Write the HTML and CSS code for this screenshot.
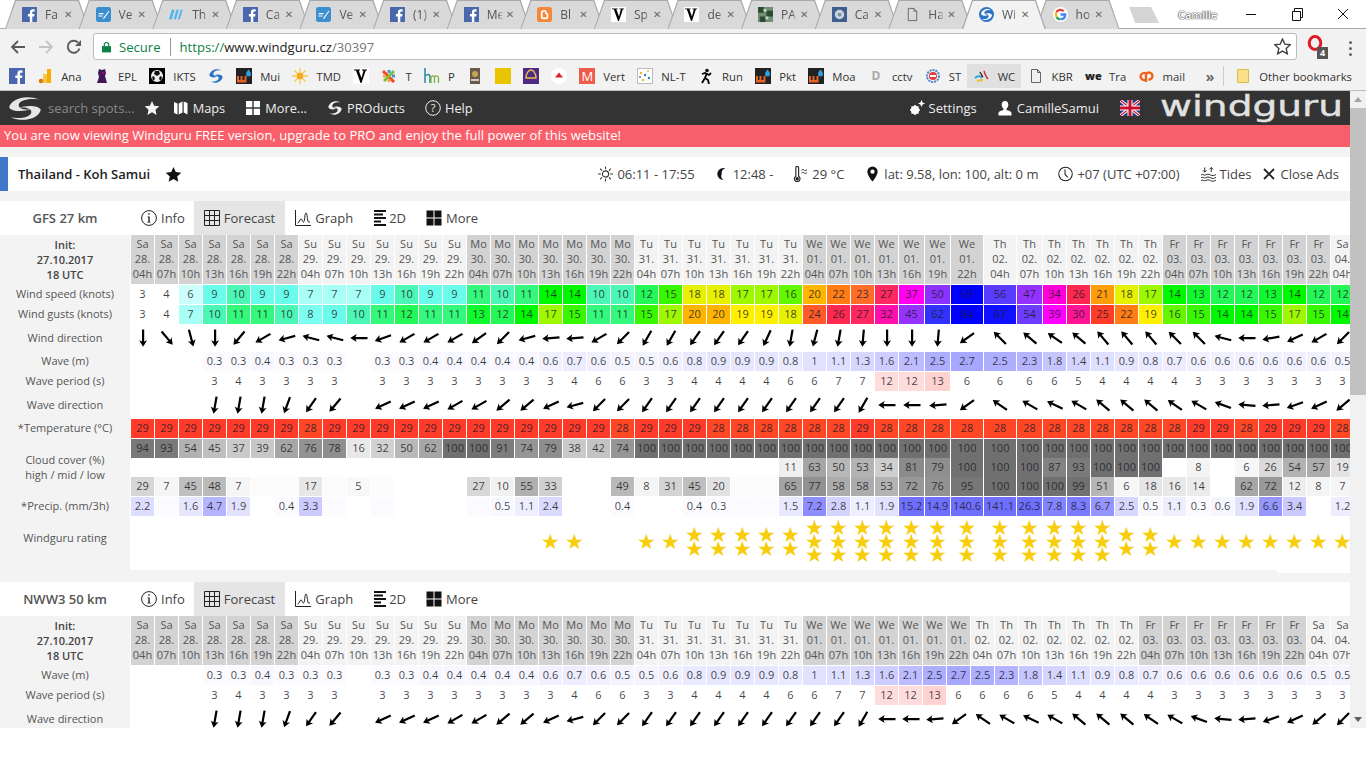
FILE: index.html
```html
<!DOCTYPE html>
<html lang="en">
<head>
<meta charset="utf-8">
<title>Windguru - Thailand - Koh Samui</title>
<link rel="stylesheet" href="styles.css">
</head>
<body>
<svg class="defs" width="0" height="0" aria-hidden="true">
  <symbol id="arrow" viewBox="0 0 20 20"><path d="M9 1.500h2.200v12l2.900-1.200L10.100 18.800 6.100 12.300 9 13.500z"/></symbol>
  <symbol id="swirl" viewBox="0 0 24 24" preserveAspectRatio="none"><path d="M2 11C3 4 12-1 21 4 14 2.500 8 5 8 9c0 3 4 4.500 8 3.500C11 15 4 15 2 11z"/><path d="M22 13c-1 7-10 12-19 7 7 1.500 13-1 13-5 0-3-4-4.500-8-3.500C13 9 20 9 22 13z"/></symbol>
  <symbol id="star" viewBox="0 0 24 24"><path d="M12 1.500l3.200 7.100 7.800.9-5.800 5.200 1.600 7.700L12 18.500l-6.800 3.900 1.600-7.700L1 9.500l7.800-.9z"/></symbol>
  <symbol id="fb" viewBox="0 0 16 16"><rect width="16" height="16" fill="#4a66ad"/><path fill="#fff" d="M11 16V10h2l.4-2.500H11V6c0-.8.3-1.200 1.200-1.200h1.300V2.500C13 2.400 12.300 2.300 11.500 2.300 9.600 2.300 8.400 3.500 8.400 5.600v1.900H6.300V10h2.100v6z"/></symbol>
  <symbol id="ve" viewBox="0 0 16 16"><rect width="16" height="16" rx="2.500" fill="#3c8fcf"/><path fill="#fff" d="M3 6.500h5v1.200H3zM2.500 9h4.500v1.200H2.500zM7.500 12 13.500 4l.8.500-6 8.500z"/></symbol>
  <symbol id="slashes" viewBox="0 0 16 16"><path fill="#4fb4ea" d="M3 3h3L3 13H0zM8 3h2.500L7.500 13H5zM12.500 3H14.500L11.500 13H9.500z"/></symbol>
  <symbol id="blogger" viewBox="0 0 16 16"><rect width="16" height="16" rx="3" fill="#f5863a"/><path fill="none" stroke="#fff" stroke-width="1.800" d="M5 6.500C5 4.500 6 4 7.500 4H8c1 0 1.500 .8 1.500 2.300 0 .4.400.7 1 .7 .6 0 .7.300.7 1v2.500c0 1-1 1.700-2 1.700H6.700C5.700 12.300 5 11.500 5 10.500z"/></symbol>
  <symbol id="doc" viewBox="0 0 16 16"><path fill="none" stroke="#666" d="M3.500 1.500h6l3 3v10h-9zM9.500 1.500v3h3"/></symbol>
  <symbol id="wu" viewBox="0 0 16 16"><rect width="16" height="16" fill="#222"/><path fill="#e8632a" d="M1 8h2v4h1.500V8h2v4h2V8h2v6.500H1z"/><path fill="#2e9fe0" d="M12.500 1.500c1.500 2 2.500 3.200 2.500 4.500a2.500 2.500 0 0 1-5 0c0-1.300 1-2.500 2.500-4.500z"/></symbol>
  <symbol id="vlogo" viewBox="0 0 16 16"><rect width="16" height="16" fill="#fff"/><path d="M1 1.500h6v1H5.700L8.500 10l2-7.500H9v-1h5v1h-1.300L8.500 15h-1L3 2.500H1z"/></symbol>
</svg>

<header class="browser">
  <div class="tabstrip">
    <div class="tab"><svg class="fav"><use href="#fb"/></svg><span class="tab-title">Fa</span><span class="tab-x">✕</span></div>
    <div class="tab"><svg class="fav"><use href="#ve"/></svg><span class="tab-title">Ve</span><span class="tab-x">✕</span></div>
    <div class="tab"><svg class="fav"><use href="#slashes"/></svg><span class="tab-title">Th</span><span class="tab-x">✕</span></div>
    <div class="tab"><svg class="fav"><use href="#fb"/></svg><span class="tab-title">Ca</span><span class="tab-x">✕</span></div>
    <div class="tab"><svg class="fav"><use href="#ve"/></svg><span class="tab-title">Ve</span><span class="tab-x">✕</span></div>
    <div class="tab"><svg class="fav"><use href="#fb"/></svg><span class="tab-title">(1)</span><span class="tab-x">✕</span></div>
    <div class="tab"><svg class="fav"><use href="#fb"/></svg><span class="tab-title">Me</span><span class="tab-x">✕</span></div>
    <div class="tab"><svg class="fav"><use href="#blogger"/></svg><span class="tab-title">Bl</span><span class="tab-x">✕</span></div>
    <div class="tab"><svg class="fav"><use href="#vlogo"/></svg><span class="tab-title">Sp</span><span class="tab-x">✕</span></div>
    <div class="tab"><svg class="fav"><use href="#vlogo"/></svg><span class="tab-title">de</span><span class="tab-x">✕</span></div>
    <div class="tab"><svg class="fav" viewBox="0 0 16 16"><rect width="16" height="16" fill="#6f8f70"/><path fill="#2d4a33" d="M0 0h6v6H0zM9 4h7v6H9zM2 10h6v6H2z"/><path fill="#c9d6c3" d="M6 2h3v3H6zM8 10h3v3H8z"/></svg><span class="tab-title">PA</span><span class="tab-x">✕</span></div>
    <div class="tab"><svg class="fav" viewBox="0 0 16 16"><rect width="16" height="16" fill="#3f5f8f"/><circle cx="8" cy="8" r="5" fill="#c9d4dd"/><circle cx="8" cy="8" r="2" fill="#7a8ea6"/></svg><span class="tab-title">Ca</span><span class="tab-x">✕</span></div>
    <div class="tab"><svg class="fav"><use href="#doc"/></svg><span class="tab-title">Ha</span><span class="tab-x">✕</span></div>
    <div class="tab tab-active"><svg class="fav" viewBox="0 0 16 16"><circle cx="8" cy="8" r="8" fill="#2a73c6"/><svg x="1" y="1" width="14" height="14" fill="#fff"><use href="#swirl"/></svg></svg><span class="tab-title">Wi</span><span class="tab-x">✕</span></div>
    <div class="tab"><svg class="fav" viewBox="0 0 16 16"><circle cx="8" cy="8" r="8" fill="#fff"/><path fill="none" stroke="#4285f4" stroke-width="2.500" d="M8 8h5c0 3-2 5-5 5"/><path fill="none" stroke="#34a853" stroke-width="2.500" d="M8 13c-2 0-3.500-1-4.300-2.700"/><path fill="none" stroke="#fbbc05" stroke-width="2.500" d="M3.700 10.300C3 9 3 7 3.700 5.700"/><path fill="none" stroke="#ea4335" stroke-width="2.500" d="M3.700 5.700C5 3 9 2 11.500 4.500"/></svg><span class="tab-title">ho</span><span class="tab-x">✕</span></div>
    <div class="newtab"></div>
    <div class="winctl">
      <span class="profile">Camille</span>
      <svg class="winbtn" viewBox="0 0 46 16"><path fill="none" stroke="#111" d="M18 8.500h10"/></svg>
      <svg class="winbtn" viewBox="0 0 46 16"><path fill="none" stroke="#111" d="M18.500 5.500h8v9h-8zM20.500 5.500v-3h8v9h-2"/></svg>
      <svg class="winbtn" viewBox="0 0 46 16"><path fill="none" stroke="#111" d="M18 3l10 10M28 3L18 13"/></svg>
    </div>
  </div>
  <div class="toolbar">
    <svg class="navbtn" viewBox="0 0 16 16"><path fill="none" stroke="#5a5a5a" stroke-width="1.800" d="M15 8H2M8 2 2 8l6 6"/></svg>
    <svg class="navbtn" viewBox="0 0 16 16"><path fill="none" stroke="#c4c4c4" stroke-width="1.800" d="M1 8h13M8 2l6 6-6 6"/></svg>
    <svg class="navbtn" viewBox="0 0 16 16"><path fill="none" stroke="#5a5a5a" stroke-width="1.900" d="M13.500 9.500A6 6 0 1 1 12 3.500"/><path fill="#5a5a5a" d="M15 1v6H9z"/></svg>
    <div class="omnibox">
      <svg class="lock" viewBox="0 0 10 12"><path fill="#0b8043" d="M0 5h10v7H0z"/><path fill="none" stroke="#0b8043" stroke-width="1.300" d="M2.500 5V3.500a2.500 2.500 0 0 1 5 0V5"/></svg>
      <span class="secure">Secure</span>
      <span class="url"><span class="url-scheme">https://</span><span class="url-host">www.windguru.cz</span><span class="url-path">/30397</span></span>
      <svg class="omni-star" viewBox="0 0 24 24"><use href="#star" fill="none" stroke="#444" stroke-width="2"/></svg>
    </div>
    <div class="opera"><svg viewBox="0 0 18 20" class="opera-o"><ellipse cx="8" cy="8" rx="5.800" ry="6.500" fill="none" stroke="#e01b24" stroke-width="3"/></svg><span class="opera-badge">4</span></div>
    <div class="dots"><i></i><i></i><i></i></div>
  </div>
  <div class="bookmarks">
    <a class="bm bm-icon"><svg class="bmi"><use href="#fb"/></svg></a>
    <a class="bm"><svg class="bmi" viewBox="0 0 16 16"><path fill="#f9ab00" d="M10 1h4v14h-4z"/><path fill="#f6c94c" d="M6 6h4v9H6z"/><circle cx="4" cy="13" r="2.200" fill="#e37400"/></svg>Ana</a>
    <a class="bm"><svg class="bmi" viewBox="0 0 16 16"><path fill="#3d195b" d="M5 1l3 1 3-1 1 4-1 3 2 7H3l2-6-1-4z"/><circle cx="9" cy="5" r="1" fill="#e90052"/></svg>EPL</a>
    <a class="bm"><svg class="bmi" viewBox="0 0 16 16"><rect width="16" height="16" fill="#000"/><circle cx="8" cy="8" r="6" fill="#eee"/><path fill="#111" d="M6 3h4l1 3-3 2-3-2zM3 9l2-1 1 3-2 2zM13 9l-2-1-1 3 2 2z"/></svg>IKTS</a>
    <a class="bm bm-icon"><svg class="bmi bmi-swirl"><use href="#swirl"/></svg></a>
    <a class="bm"><svg class="bmi"><use href="#wu"/></svg>Mui</a>
    <a class="bm"><svg class="bmi" viewBox="0 0 16 16"><circle cx="8" cy="8" r="3.500" fill="#f4a81d"/><path stroke="#f7c948" stroke-width="1.300" d="M8 0v4M8 12v4M0 8h4M12 8h4M2.500 2.500l3 3M10.500 10.500l3 3M13.500 2.500l-3 3M5.500 10.500l-3 3"/></svg>TMD</a>
    <a class="bm bm-icon"><svg class="bmi"><use href="#vlogo"/></svg></a>
    <a class="bm"><svg class="bmi" viewBox="0 0 16 16"><g fill="none" stroke-width="3"><path stroke="#f44321" d="M2 3l11 11"/><path stroke="#7ac143" d="M3 13 13 3"/><path stroke="#5091cd" d="M8 2v3M14 8h-3"/><path stroke="#f9a541" d="M8 14v-3M2 8h3"/></g></svg>T</a>
    <a class="bm"><svg class="bmi" viewBox="0 0 16 16"><path fill="none" stroke="#1f8a9e" stroke-width="1.500" d="M1 0v15M1 8c4-3 5-1 5 1v6"/><path fill="none" stroke="#79b33c" stroke-width="1.300" d="M7 15V9c2-2 3-1 3.500 0v6M10.500 9c2-2 4-1 4 1v5"/></svg>P</a>
    <a class="bm bm-icon"><svg class="bmi" viewBox="0 0 16 16"><rect x="3" width="10" height="16" fill="#6b5a4a"/><circle cx="8" cy="6" r="3" fill="#c4a552"/><path fill="#ccc" d="M4 11h8v2H4z"/></svg></a>
    <a class="bm bm-icon"><svg class="bmi" viewBox="0 0 16 16"><rect width="16" height="16" fill="#e8c500"/></svg></a>
    <a class="bm bm-icon"><svg class="bmi" viewBox="0 0 16 16"><rect width="16" height="16" fill="#4e2a84"/><path fill="none" stroke="#e8c04a" stroke-width="1.400" d="M3 10C3 5 6 2 8 2s5 3 5 8z"/></svg></a>
    <a class="bm bm-icon"><svg class="bmi" viewBox="0 0 16 16"><circle cx="8" cy="8" r="8" fill="#fff"/><path fill="#e0202a" d="M8 4.500l4 5H4z"/></svg></a>
    <a class="bm"><span class="bm-m bmi">M</span>Vert</a>
    <a class="bm"><svg class="bmi" viewBox="0 0 16 16"><rect x=".5" y=".5" width="15" height="15" fill="#fff" stroke="#bbb"/><g fill="#e8b83a"><circle cx="4" cy="5" r="1.200"/><circle cx="11" cy="3" r="1"/><circle cx="6" cy="12" r="1.200"/></g><g fill="#3d82c4"><circle cx="8" cy="7" r="1.200"/><circle cx="12" cy="10" r="1.200"/><circle cx="3" cy="9" r="1"/></g></svg>NL-T</a>
    <a class="bm"><svg class="bmi" viewBox="0 0 16 16"><circle cx="9" cy="2.500" r="1.800"/><path stroke="#000" stroke-width="1.800" fill="none" d="M9 5 7 10l3 2 1 4M7 10l-3 5M4 6l3-1 4 2 2-2"/></svg>Run</a>
    <a class="bm"><svg class="bmi"><use href="#wu"/></svg>Pkt</a>
    <a class="bm"><svg class="bmi"><use href="#wu"/></svg>Moa</a>
    <a class="bm"><span class="bm-d bmi">D</span>cctv</a>
    <a class="bm"><svg class="bmi" viewBox="0 0 16 16"><circle cx="8" cy="8" r="6" fill="none" stroke="#4a86c8" stroke-width="2" stroke-dasharray="2 1"/><circle cx="8" cy="8" r="4" fill="#e23b3b"/><path fill="#fff" d="M5 7h6v2H5z"/></svg>ST</a>
    <a class="bm bm-active"><svg class="bmi" viewBox="0 0 16 16"><path fill="none" stroke="#2a9fd6" stroke-width="1.800" d="M1 10c3-3 6-2 7 0"/><path fill="none" stroke="#f0c020" stroke-width="1.800" d="M3 13c3-1 5-1 6-1"/><path fill="none" stroke="#c33" stroke-width="1.500" d="M10 3c1 3 2 6 4 8"/><path fill="none" stroke="#333" stroke-width="1.500" d="M6 4c1 2 2 4 3 5"/></svg>WC</a>
    <a class="bm"><svg class="bmi"><use href="#doc"/></svg>KBR</a>
    <a class="bm"><span class="bm-we">we</span>Tra</a>
    <a class="bm"><svg class="bmi" viewBox="0 0 16 16"><path fill="none" stroke="#f0641e" stroke-width="2.400" d="M7 5.500a3.500 3.500 0 1 0 0 6h1M7 14V6a3.500 3.500 0 1 1 2.500 5.500"/></svg>mail</a>
    <span class="bm-more">»</span>
    <span class="bm-sep"></span>
    <a class="bm bm-other"><svg class="bmi" viewBox="0 0 16 16"><path fill="#fbe08a" stroke="#d9b84e" d="M2.500 1.500h8l3 0v13h-11z"/></svg>Other bookmarks</a>
  </div>
</header>

<div class="viewport">
  <main class="page">
    <nav class="topnav">
      <svg class="wg-mark" viewBox="0 0 24 24" preserveAspectRatio="none"><use href="#swirl" width="24" height="24"/></svg>
      <span class="search">search spots...</span>
      <svg class="nav-star"><use href="#star"/></svg>
      <a class="nav-item nav-first"><svg class="ni" viewBox="0 0 16 16"><path fill="#fff" d="M1 2l3.500 1.500v11L1 13zM5.700 3.500 9.500 1.500v11l-3.800 2zM10.700 1.500 14.500 3v11.500l-3.800-2z"/></svg>Maps</a>
      <a class="nav-item"><svg class="ni" viewBox="0 0 16 16"><path fill="#fff" d="M1 1h6.300v6.300H1zM8.700 1H15v6.300H8.700zM1 8.700h6.300V15H1zM8.700 8.700H15V15H8.700z"/></svg>More...</a>
      <a class="nav-item"><svg class="ni ni-swirl"><use href="#swirl"/></svg>PROducts</a>
      <a class="nav-item"><svg class="ni" viewBox="0 0 16 16"><circle cx="8" cy="8" r="7.300" fill="none" stroke="#eee"/><text x="8" y="11.800" text-anchor="middle" class="help-q">?</text></svg>Help</a>
      <span class="nav-spacer"></span>
      <a class="nav-item nav-right"><svg class="ni" viewBox="0 0 16 16"><circle cx="6" cy="10" r="3" fill="none" stroke="#fff" stroke-width="2.400"/><path stroke="#fff" stroke-width="1.500" d="M6 5v10M1 10h10M2.500 6.500l7 7M9.500 6.500l-7 7"/><circle cx="12.500" cy="3.500" r="1.500" fill="none" stroke="#fff"/><path stroke="#fff" d="M12.500 .5v6M9.500 3.500h6"/></svg>Settings</a>
      <a class="nav-item nav-right"><svg class="ni" viewBox="0 0 16 16"><path fill="#fff" d="M8 1c2.200 0 3.300 1.700 3.300 3.800 0 1.700-.8 3.200-1.800 4v1.200c2 .6 5 1.300 5 3v2.500H1.500V13c0-1.700 3-2.400 5-3V8.800c-1-.8-1.800-2.300-1.800-4C4.700 2.700 5.800 1 8 1z"/></svg>CamilleSamui</a>
      <svg class="flag" viewBox="0 0 20 16"><rect width="20" height="16" fill="#2b3a80"/><path stroke="#fff" stroke-width="3" d="M0 0l20 16M20 0 0 16"/><path stroke="#c8102e" stroke-width="1.200" d="M0 0l20 16M20 0 0 16"/><path stroke="#fff" stroke-width="5" d="M10 0v16M0 8h20"/><path stroke="#c8102e" stroke-width="3" d="M10 0v16M0 8h20"/></svg>
      <svg class="wg-logo" viewBox="0 0 183 34"><text x="0" y="25" textLength="183" lengthAdjust="spacingAndGlyphs" class="wg-logo-text">windguru</text></svg>
    </nav>
    <div class="banner">You are now viewing Windguru FREE version, upgrade to PRO and enjoy the full power of this website!</div>

    <section class="spot">
      <h1 class="spot-name">Thailand - Koh Samui</h1>
      <svg class="spot-star"><use href="#star"/></svg>
      <span class="spot-spacer"></span>
      <span class="meta"><svg class="mi" viewBox="0 0 16 16"><circle cx="8" cy="8" r="3.300" fill="none" stroke="#333" stroke-width="1.200"/><path stroke="#333" stroke-width="1.100" d="M8 0v3M8 13v3M0 8h3M13 8h3M2.300 2.300l2 2M11.700 11.700l2 2M13.700 2.300l-2 2M4.300 11.700l-2 2"/></svg>06:11 - 17:55</span>
      <span class="meta meta-moon"><svg class="mi" viewBox="0 0 16 16"><path fill="#111" d="M10 1.500a6.500 6.500 0 1 0 0 13 5.500 5.500 0 0 1-1.800-6.500A5.500 5.500 0 0 1 12 2c-.6-.3-1.300-.5-2-.5z"/></svg>12:48 -</span>
      <span class="meta"><svg class="mi" viewBox="0 0 16 16"><path fill="none" stroke="#222" stroke-width="1.200" d="M3 1.500a1.500 1.500 0 0 1 3 0v9a3 3 0 1 1-3 0z"/><circle cx="4.500" cy="13" r="1.800" fill="#222"/><path fill="none" stroke="#222" d="M9 4c1.200-1 2-1 3 0s2 0 3-.5M9 7c1.200-1 2-1 3 0s2 0 3-.5"/></svg>29 °C</span>
      <span class="meta meta-pin"><svg class="mi" viewBox="0 0 16 16"><path fill="#111" fill-rule="evenodd" d="M8 0a5.500 5.500 0 0 1 5.500 5.500C13.500 9.500 8 16 8 16S2.500 9.500 2.500 5.500A5.500 5.500 0 0 1 8 0zm0 3.200a2.300 2.300 0 1 0 0 4.600 2.300 2.300 0 0 0 0-4.600z"/></svg>lat: 9.58, lon: 100, alt: 0 m</span>
      <span class="meta"><svg class="mi" viewBox="0 0 16 16"><circle cx="8" cy="8" r="7.200" fill="none" stroke="#222" stroke-width="1.100"/><path fill="none" stroke="#222" stroke-width="1.100" d="M7.500 3v5.500l3 3"/></svg>+07 (UTC +07:00)</span>
      <span class="meta meta-tides"><svg class="mi" viewBox="0 0 16 16"><path fill="none" stroke="#222" d="M4 1v5M2 4l2 2 2-2M11 6V1M9 3l2-2 2 2M0 9c2-1.500 3 1 5 0s3-1 5 0 4 1 6-.5M0 12c2-1.500 3 1 5 0s3-1 5 0 4 1 6-.5M0 15c2-1.500 3 1 5 0s3-1 5 0 4 1 6-.5"/></svg>Tides</span>
      <span class="meta meta-close"><svg class="mi mi-x" viewBox="0 0 14 14"><path fill="none" stroke="#222" stroke-width="1.800" d="M2 2l10 10M12 2 2 12"/></svg>Close Ads</span>
    </section>

    <section class="model model-gfs">
      <div class="model-tabs"></div>
      <div class="grid grid-gfs" id="gfs"></div>
    </section>
    <div class="model-gap"><span class="overhang"></span></div>
    <section class="model model-nww">
      <div class="model-tabs"></div>
      <div class="grid grid-nww" id="nww"></div>
    </section>
  </main>
  <aside class="scrollbar">
    <span class="sb-btn"><i class="sb-up"></i></span>
    <span class="sb-thumb"></span>
    <span class="sb-track"></span>
    <span class="sb-btn"><i class="sb-down"></i></span>
  </aside>
</div>
<script src="app.js"></script>
</body>
</html>
```
FILE: styles.css
```css
* { box-sizing: border-box; }
html, body { margin: 0; height: 768px; overflow: hidden; background: #fff; }
body { font-family: "Open Sans", "Liberation Sans", sans-serif; color: #333; display: flex; flex-direction: column; }
.defs { position: absolute; }
a { color: inherit; text-decoration: none; }
svg { display: block; flex: none; }

/* browser chrome */
.browser { flex: none; height: 91px; }
.tabstrip { height: 29px; display: flex; padding-left: 5px; border-bottom: 1px solid #a9a9a9; background: #fff; }
.tab { width: 84px; height: 29px; margin-right: -10.4px; padding-left: 17px; position: relative; display: flex; align-items: center; font-size: 12px; color: #555; flex: none; }
.tab::before, .tab::after { content: ""; position: absolute; inset: 0; clip-path: polygon(0 100%, 10px 0, 74px 0, 84px 100%); }
.tab::before { background: #a9a9a9; }
.tab::after { background: #d9d9d9; top: 1px; left: 1px; right: 1px; clip-path: polygon(0 100%, 10px 0, 72px 0, 82px 100%); }
.tab > * { position: relative; z-index: 1; }
.tab-active { z-index: 2; }
.tab-active::after { background: #f2f2f2; bottom: -1px; }
.fav { width: 15px; height: 15px; margin-right: 8px; }
.tab-title { width: 16px; white-space: nowrap; -webkit-mask-image: linear-gradient(90deg, #000 70%, transparent); mask-image: linear-gradient(90deg, #000 70%, transparent); }
.tab-x { width: 10px; margin-left: 3px; font-size: 10px; font-weight: 700; color: #6a6a6a; line-height: 1; font-family: "DejaVu Sans", sans-serif; }
.newtab { width: 30px; height: 16px; margin: 7px 0 0 20px; background: #d4d4d4; flex: none; clip-path: polygon(0 0, 22px 0, 100% 100%, 6px 100%); }
.winctl { margin-left: auto; display: flex; align-items: center; height: 28px; }
.profile { font-size: 11px; width: 50px; color: #fff; text-shadow: 0 0 1.500px #222, 0 0 1px #222; font-weight: 600; white-space: nowrap; }
.winbtn { width: 46px; height: 16px; }
.toolbar { height: 33px; padding: 4px 0 0 10px; background: #f2f2f2; display: flex; align-items: flex-start; }
.navbtn { width: 16px; height: 16px; margin: 6px 12px 0 0; }
.omnibox { width: 1204px; height: 27px; margin-left: -1px; display: flex; align-items: center; background: #fff; border: 1px solid #bdbdbd; border-radius: 3px; padding: 0 8px; font-size: 13.100px; }
.lock { width: 9px; height: 12px; margin-right: 8px; }
.secure { color: #0b8043; padding-right: 9px; border-right: 1px solid #9a9a9a; line-height: 18px; margin-right: 9px; }
.url { color: #777; }
.url-scheme { color: #0b8043; }
.url-host { color: #222; }
.omni-star { width: 17px; height: 17px; margin-left: auto; margin-right: -3px; }
.opera { position: relative; width: 24px; height: 24px; margin: 2px 0 0 10px; }
.opera-o { width: 18px; height: 20px; }
.opera-badge { position: absolute; left: 10px; top: 12px; width: 11px; height: 12px; background: #555; color: #fff; font-size: 9px; line-height: 12px; text-align: center; font-weight: 700; }
.dots { width: 12px; margin: 8px 0 0 13px; display: flex; flex-direction: column; gap: 3px; align-items: center; }
.dots i { width: 3px; height: 3px; background: #666; border-radius: 50%; }
.bookmarks { height: 29px; padding-left: 3px; background: #f2f2f2; border-bottom: 1px solid #bdbdbd; display: flex; align-items: center; font-size: 11.300px; color: #333; }
.bm { display: flex; align-items: center; gap: 8px; height: 24px; padding: 0 6.200px; flex: none; }
.bm-icon { padding: 0 6px; }
.bm-active { background: #e0e0e0; }
.bmi { width: 16px; height: 16px; flex: none; }
.bmi-swirl { fill: #2a73c6; }
.bm-m { background: #ef5b4a; color: #fff; font-size: 13px; line-height: 16px; text-align: center; }
.bm-d { color: #aaa; font-weight: 700; font-size: 12px; line-height: 16px; text-align: center; }
.bm-we { width: 16px; font-weight: 800; font-size: 11px; color: #222; line-height: 16px; }
.bm-more { margin-left: auto; font-size: 14px; color: #666; font-weight: 700; padding-right: 9px; }
.bm-sep { width: 1px; height: 20px; background: #ccc; }
.bm-other { padding: 0 14px 0 11px; }

/* page frame */
.viewport { flex: none; height: 637px; display: flex; }
.page { width: 1350px; height: 637px; overflow: hidden; background: #f3f3f3; flex: none; }
.scrollbar { width: 16px; background: #f1f1f1; display: flex; flex-direction: column; }
.sb-btn { height: 17px; display: flex; align-items: center; justify-content: center; flex: none; }
.sb-up { border: 4px solid transparent; border-top: 0; border-bottom: 5px solid #a3a3a3; width: 0; height: 0; }
.sb-down { border: 4px solid transparent; border-bottom: 0; border-top: 5px solid #606060; width: 0; height: 0; }
.sb-thumb { height: 287px; background: #c1c1c1; flex: none; }
.sb-track { flex: 1; }

/* site nav */
.topnav { height: 34px; background: #333; display: flex; align-items: center; padding-left: 6px; padding-right: 7px; gap: 20px; color: #eee; font-size: 12.800px; }
.wg-mark { width: 38px; height: 27px; fill: #e6e6e6; margin-right: -16px; }
.search { color: #8a8a8a; margin-right: -11px; font-size: 13px; }
.nav-star { width: 16px; height: 16px; fill: #f4f4f4; margin-right: -7px; }
.nav-item { display: flex; align-items: center; gap: 4px; }
.nav-right { font-size: 13px; }
.ni { width: 16px; height: 16px; }
.ni-swirl { fill: #eee; }
.help-q { fill: #eee; font-size: 11px; }
.nav-spacer { flex: 1; }
.flag { width: 20px; height: 16px; margin-left: 1px; }
.wg-logo { width: 183px; height: 34px; }
.wg-logo-text { font-family: "DejaVu Sans", sans-serif; font-size: 29px; fill: #e2e2e2; stroke: #e2e2e2; stroke-width: .4px; }
.banner { height: 22px; background: #f85f6a; color: #fff; font-size: 13px; letter-spacing: .02px; line-height: 21px; padding-left: 4px; white-space: nowrap; }

/* spot bar */
.spot { height: 34px; margin-top: 10px; background: #fff; border-left: 8px solid #3f78c8; display: flex; align-items: center; padding: 0 11px 0 10px; font-size: 13px; color: #444; }
.spot-name { margin: 0; font-size: 13px; font-weight: 600; color: #222; }
.spot-star { width: 17px; height: 17px; margin-left: 15px; fill: #111; }
.spot-spacer { flex: 1; }
.meta { display: flex; align-items: center; gap: 4px; margin-left: 20px; white-space: nowrap; }
.meta-moon { margin-left: 19px; }
.meta-pin { margin-left: 21px; }
.meta-tides { margin-left: 21px; }
.meta-close { margin-left: 11px; }
.mi { width: 15px; height: 16px; }
.mi-x { width: 14px; height: 14px; }

/* model block */
.model { margin-top: 10px; background: #fff; }
.model-nww { margin-top: 0; height: 146px; overflow: hidden; }
.model-gap { height: 12px; display: flex; justify-content: flex-end; align-items: flex-start; }
.overhang { width: 73px; height: 3px; background: #fff; }
.model-tabs { height: 34px; display: flex; align-items: stretch; font-size: 13px; color: #444; }
.model-title { width: 130px; text-align: center; line-height: 34px; font-weight: 600; color: #555; }
.mtab { display: flex; align-items: center; gap: 4px; padding: 0 10px; }
.mtab-info { padding: 0 9px 0 11px; }
.mtab-on { background: #e5e5e5; }
.mtab-2d { margin-left: 1px; gap: 3px; }
.mtab svg { width: 16px; height: 16px; }
.mtab-2d svg { width: 12px; }

/* forecast grid */
.grid { display: grid; column-gap: 1px; font-size: 11px; color: #333; }
.grid-gfs { grid-template-columns: 130px repeat(32, 23px) 25px 25px 32px 32px 25px repeat(13, 23px); grid-template-rows: 50px 20px 20px 27px 20px 20px 27px 20px 19px 19px 20px 20px 53px; }
.grid-nww { grid-template-columns: 130px repeat(51, 23px); grid-template-rows: 50px 20px 20px 27px; }
.lbl { grid-column: 1; background: #f3f3f3; display: flex; align-items: center; justify-content: center; text-align: center; color: #555; line-height: 15px; padding-bottom: 3px; }
.lbl-init { color: #444; font-weight: 600; padding-bottom: 2px; }
.lbl-cloud { grid-row: span 3; padding-bottom: 2px; }
.lbl-rate { padding-bottom: 12px; }
.c { height: 19px; line-height: 17px; text-align: center; white-space: nowrap; color: rgba(30, 30, 40, .85); }
.hd { height: 49px; line-height: 15px; padding-top: 1px; background: #f3f3f3; color: #555; }
.hd-dark { background: #d3d3d3; }
.dir { height: 27px; display: flex; justify-content: center; align-items: center; }
.dir svg { width: 20px; height: 20px; margin-top: -2px; fill: #000; }
.rate { height: 53px; display: flex; flex-direction: column; align-items: center; justify-content: center; color: #f8cd0a; font-family: "DejaVu Sans", sans-serif; font-size: 21px; line-height: 13.500px; padding-bottom: 2px; }
```
FILE: app.js
```js
var WIND = {3:'#fff',4:'#fff',6:'#ccfffb',7:'#a8fff6',8:'#7bfff0',9:'#6afcea',10:'#4cf6b4',11:'#34f87c',12:'#24f856',13:'#10f92c',14:'#00f800',15:'#38f800',16:'#64f800',17:'#9ef800',18:'#e6f000',19:'#fff000',20:'#ffb400',21:'#ff9c0a',22:'#ff7d14',23:'#ff6e28',24:'#ff5a28',25:'#ff3c28',26:'#ff2850',27:'#ff2860',30:'#ff1496',32:'#ff10aa',34:'#ff00d8',37:'#ff00f0',39:'#ff00ff',45:'#9632ff',47:'#9632ff',50:'#8c32ff',54:'#6e3cff',56:'#5a3cff',62:'#3232ff',67:'#1010ff',69:'#0000ff',84:'#0000ff'};

var windSpeed = '3 4 6 9 10 9 9 7 7 7 9 10 9 9 11 10 11 14 14 10 10 12 15 18 18 17 17 16 20 22 23 27 37 50 69 56 47 34 26 21 18 17 14 13 12 12 13 14 12 12';
var windGust = '3 4 7 10 11 11 10 8 9 10 11 12 11 11 13 12 14 17 15 11 11 15 17 20 20 19 19 18 24 26 27 32 45 62 84 67 54 39 30 25 22 19 16 15 14 14 15 17 15 14';
var windDir = '0 -40 -15 0 40 60 75 105 105 90 70 60 60 60 55 45 75 85 85 60 45 30 30 35 35 35 25 10 15 10 5 0 0 5 55 135 130 125 130 140 140 140 135 135 105 90 80 65 60 45';
var wave = '_ _ _ .3 .3 .4 .3 .3 .3 _ .3 .3 .4 .4 .4 .4 .4 .6 .7 .6 .5 .5 .6 .8 .9 .9 .9 .8 1 1.1 1.3 1.6 2.1 2.5 2.7 2.5 2.3 1.8 1.4 1.1 .9 .8 .7 .6 .6 .6 .6 .6 .6 .5 .5';
var period = '_ _ _ 3 4 3 3 3 3 _ 3 3 3 3 3 3 3 3 4 6 6 3 3 4 4 4 4 6 6 7 7 12 12 13 6 6 6 6 5 4 4 4 4 3 3 3 3 3 3 3 3';
var waveDir = '_ _ _ 10 10 10 20 35 40 _ 65 65 65 60 60 50 50 65 75 45 45 35 35 35 35 35 35 35 35 35 30 90 90 85 55 125 120 115 120 130 130 130 125 120 110 95 85 70 65 50 45';
var temp = '29 29 29 29 29 29 29 28 29 29 29 29 29 29 29 29 29 29 29 29 28 29 29 29 28 28 28 28 28 28 29 28 28 28 28 28 28 28 28 28 28 28 28 29 29 28 29 29 29 28';
var cloudH = '94 93 54 45 37 39 62 76 78 16 32 50 62 100 100 91 74 79 38 42 74 100 100 100 100 100 100 100 100 100 100 100 100 100 100 100 100 100 100 100 100 100 100 100 100 100 100 100 100 100';
var cloudM = '_ _ _ _ _ _ _ _ _ _ _ _ _ _ _ _ _ _ _ _ _ _ _ _ _ _ _ 11 63 50 53 34 81 79 100 100 100 87 93 100 100 100 _ 8 _ 6 26 54 57 19';
var cloudL = '29 7 45 48 7 . . 17 . 5 . _ _ _ 27 10 55 33 _ _ 49 8 31 45 20 . . 65 77 58 58 53 72 76 95 100 100 100 99 51 6 18 16 14 _ 62 72 12 8 7';
var precip = '2.2 . 1.6 4.7 1.9 _ .4 3.3 . _ . _ _ _ . .5 1.1 2.4 _ _ .4 _ _ .4 .3 . . 1.5 7.2 2.8 1.1 1.9 15.2 14.9 140.6 141.1 26.3 7.8 8.3 6.7 2.5 .5 1.1 .3 .6 1.9 6.6 3.4 _ 1.2';
var rating = '0 0 0 0 0 0 0 0 0 0 0 0 0 0 0 0 0 1 1 0 0 1 1 2 2 2 2 2 3 3 3 3 3 3 3 3 3 3 3 3 2 2 1 1 1 1 1 1 1 1';

function list(s) { return s.split(' '); }
function el(tag, cls, text) {
  var e = document.createElement(tag);
  e.className = cls;
  if (text !== undefined) e.textContent = text;
  return e;
}
function show(v) { return v.charAt(0) === '.' ? (v === '.' ? '' : '0' + v) : v; }
function blue(g) { g = Math.max(0, Math.min(255, Math.round(g))); return 'rgb(' + g + ',' + g + ',255)'; }
function grey(v) { var g = Math.round(255 - 1.43 * v); return 'rgb(' + g + ',' + g + ',' + g + ')'; }

var colour = {
  wind: function (v) { return WIND[v]; },
  wave: function (v) { return blue(261 - 35 * parseFloat(v)); },
  period: function (v) { return v === '12' ? '#ffdcdc' : v === '13' ? '#ffd2d2' : ''; },
  temp: function (v) { return v === '29' ? '#ff3c2a' : '#ff4726'; },
  cloud: function (v) { return v === '.' ? '#fbfbfb' : grey(+v); },
  precip: function (v) { return v === '.' ? '#fbfbff' : blue(Math.max(110, 256 - 16 * parseFloat(v))); }
};

function addValues(root, s, kind) {
  list(s).forEach(function (v) {
    if (v === '_') { root.appendChild(el('div', 'c')); return; }
    var c = el('div', 'c', show(v));
    var bg = colour[kind](v);
    if (bg) c.style.background = bg;
    root.appendChild(c);
  });
}
function addArrows(root, s) {
  list(s).forEach(function (v) {
    var c = el('div', 'dir');
    if (v !== '_') {
      var svg = document.createElementNS('http://www.w3.org/2000/svg', 'svg');
      var use = document.createElementNS('http://www.w3.org/2000/svg', 'use');
      use.setAttribute('href', '#arrow');
      svg.appendChild(use);
      svg.style.transform = 'rotate(' + v + 'deg)';
      c.appendChild(svg);
    }
    root.appendChild(c);
  });
}
function addHeader(root, n) {
  var days = [['Sa', '28.'], ['Su', '29.'], ['Mo', '30.'], ['Tu', '31.'], ['We', '01.'], ['Th', '02.'], ['Fr', '03.'], ['Sa', '04.']];
  var hrs = ['04h', '07h', '10h', '13h', '16h', '19h', '22h'];
  for (var i = 0; i < n; i++) {
    var d = Math.floor(i / 7);
    var c = el('div', 'c hd' + (d % 2 === 0 && d < 7 ? ' hd-dark' : ''));
    [days[d][0], days[d][1], hrs[i % 7]].forEach(function (t) { c.appendChild(el('div', '', t)); });
    root.appendChild(c);
  }
}
function label(root, text, extra) {
  var l = el('div', 'lbl' + (extra ? ' ' + extra : ''));
  var inner = el('span', '');
  text.split('|').forEach(function (t, i) {
    if (i) inner.appendChild(document.createElement('br'));
    inner.appendChild(document.createTextNode(t));
  });
  l.appendChild(inner);
  root.appendChild(l);
}
function cols(s, n) { return list(s).slice(0, n).join(' '); }

function tabs(box, title) {
  box.innerHTML =
    '<div class="model-title">' + title + '</div>' +
    '<a class="mtab mtab-info"><svg viewBox="0 0 16 16"><circle cx="8" cy="8" r="7.400" fill="none" stroke="#222"/><path fill="#222" d="M7.300 3.200h1.400v1.500H7.300zM6.500 6.500h2.200v5.300h1v.8H6.300v-.8h1V7.300h-.8z"/></svg>Info</a>' +
    '<a class="mtab mtab-on"><svg viewBox="0 0 16 16"><path fill="none" stroke="#222" d="M.5 .5h15v15H.5zM5.500 .5v15M10.500 .5v15M.5 5.500h15M.5 10.500h15"/></svg>Forecast</a>' +
    '<a class="mtab"><svg viewBox="0 0 16 16"><path fill="none" stroke="#222" d="M.5 0v15.500H16M2.500 13c2 0 2-4 3.500-4s1 3 2.500 3 1-9 2.500-9 1 8 2.500 9h1.500"/></svg>Graph</a>' +
    '<a class="mtab mtab-2d"><svg viewBox="0 0 12 16"><path fill="#111" d="M0 0h12v2H0zM0 3.500h9v2H0zM0 7h12v2H0zM0 10.500h7v2H0zM0 14h12v2H0z"/></svg>2D</a>' +
    '<a class="mtab"><svg viewBox="0 0 16 16"><path fill="#111" d="M.5 .5h7v7h-7zM8.500 .5h7v7h-7zM.5 8.500h7v7h-7zM8.500 8.500h7v7h-7z"/></svg>More</a>';
}

var boxes = document.querySelectorAll('.model-tabs');
tabs(boxes[0], 'GFS 27 km');
tabs(boxes[1], 'NWW3 50 km');

var g = document.getElementById('gfs');
label(g, 'Init:|27.10.2017|18 UTC', 'lbl-init');
addHeader(g, 50);
label(g, 'Wind speed (knots)'); addValues(g, windSpeed, 'wind');
label(g, 'Wind gusts (knots)'); addValues(g, windGust, 'wind');
label(g, 'Wind direction'); addArrows(g, windDir);
label(g, 'Wave (m)'); addValues(g, cols(wave, 50), 'wave');
label(g, 'Wave period (s)'); addValues(g, cols(period, 50), 'period');
label(g, 'Wave direction'); addArrows(g, cols(waveDir, 50));
label(g, '*Temperature (°C)'); addValues(g, temp, 'temp');
label(g, 'Cloud cover (%)|high / mid / low', 'lbl-cloud');
addValues(g, cloudH, 'cloud'); addValues(g, cloudM, 'cloud'); addValues(g, cloudL, 'cloud');
label(g, '*Precip. (mm/3h)'); addValues(g, precip, 'precip');
label(g, 'Windguru rating', 'lbl-rate');
list(rating).forEach(function (n) {
  var c = el('div', 'rate');
  for (var i = 0; i < +n; i++) c.appendChild(el('span', '', '★'));
  g.appendChild(c);
});

var w = document.getElementById('nww');
label(w, 'Init:|27.10.2017|18 UTC', 'lbl-init');
addHeader(w, 51);
label(w, 'Wave (m)'); addValues(w, wave, 'wave');
label(w, 'Wave period (s)'); addValues(w, period, 'period');
label(w, 'Wave direction'); addArrows(w, waveDir);
```
